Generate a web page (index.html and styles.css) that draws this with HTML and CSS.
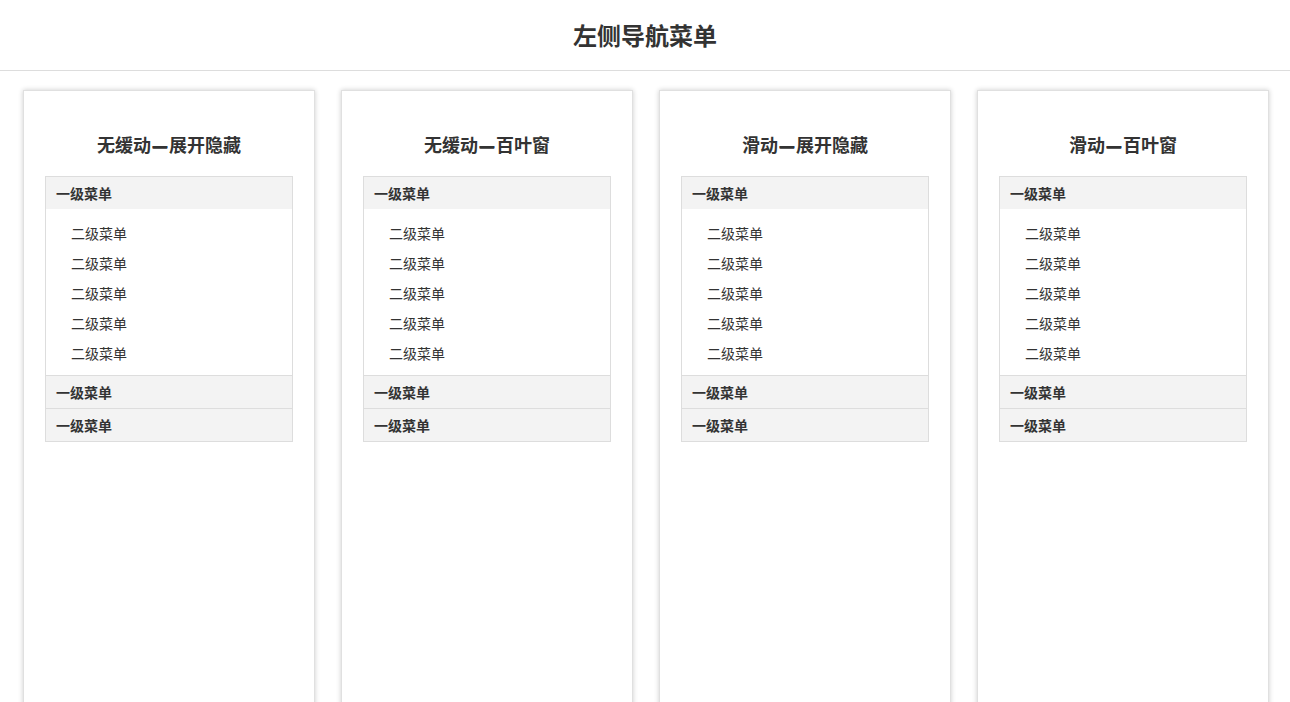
FILE: index.html
```html
<!DOCTYPE html>
<html lang="zh-CN">
<head>
<meta charset="utf-8">
<title>左侧导航菜单</title>
<link rel="stylesheet" href="styles.css">
</head>
<body>
<header class="page-header"><h1>左侧导航菜单</h1></header>
<main class="cards">
  <section class="card">
    <h2>无缓动<span class="dash">—</span>展开隐藏</h2>
    <div class="menu">
      <h3>一级菜单</h3>
      <ul><li>二级菜单</li><li>二级菜单</li><li>二级菜单</li><li>二级菜单</li><li>二级菜单</li></ul>
      <h3 class="sep">一级菜单</h3>
      <h3 class="sep">一级菜单</h3>
    </div>
  </section>
  <section class="card">
    <h2>无缓动<span class="dash">—</span>百叶窗</h2>
    <div class="menu">
      <h3>一级菜单</h3>
      <ul><li>二级菜单</li><li>二级菜单</li><li>二级菜单</li><li>二级菜单</li><li>二级菜单</li></ul>
      <h3 class="sep">一级菜单</h3>
      <h3 class="sep">一级菜单</h3>
    </div>
  </section>
  <section class="card">
    <h2>滑动<span class="dash">—</span>展开隐藏</h2>
    <div class="menu">
      <h3>一级菜单</h3>
      <ul><li>二级菜单</li><li>二级菜单</li><li>二级菜单</li><li>二级菜单</li><li>二级菜单</li></ul>
      <h3 class="sep">一级菜单</h3>
      <h3 class="sep">一级菜单</h3>
    </div>
  </section>
  <section class="card">
    <h2>滑动<span class="dash">—</span>百叶窗</h2>
    <div class="menu">
      <h3>一级菜单</h3>
      <ul><li>二级菜单</li><li>二级菜单</li><li>二级菜单</li><li>二级菜单</li><li>二级菜单</li></ul>
      <h3 class="sep">一级菜单</h3>
      <h3 class="sep">一级菜单</h3>
    </div>
  </section>
</main>
</body>
</html>
```
FILE: styles.css
```css
* { box-sizing: border-box; }
html, body { margin: 0; padding: 0; background: #fff; }
body {
  font-family: "Noto Sans CJK SC", "Noto Sans", sans-serif;
  color: #333;
  overflow: hidden;
}
.page-header {
  height: 71px;
  border-bottom: 1px solid #ddd;
  display: flex;
  align-items: center;
  justify-content: center;
}
.page-header h1 {
  margin: 0;
  font-size: 24px;
  font-weight: bold;
  line-height: 32px;
  color: #333;
}
.cards {
  display: flex;
  justify-content: center;
  gap: 26px;
  padding: 19px 0 0 2px;
}
.card {
  width: 292px;
  height: 700px;
  flex: none;
  background: #fff;
  border: 1px solid #e0e0e0;
  box-shadow: 0 0 5px rgba(0, 0, 0, 0.2);
  padding: 37px 21px 0;
}
.card h2 {
  margin: 0 0 16px;
  font-size: 18px;
  line-height: 32px;
  font-weight: bold;
  text-align: center;
  color: #333;
}
.card h2 .dash {
  display: inline-block;
  width: 18px;
  font-family: "Noto Sans CJK SC", sans-serif;
  text-shadow: 0 0.5px 0 #333, 0 -0.5px 0 #333;
}
.menu {
  border: 1px solid #ddd;
}
.menu h3 {
  margin: 0;
  height: 32px;
  line-height: 32px;
  padding-left: 10px;
  font-size: 14px;
  font-weight: bold;
  background: #f3f3f3;
  color: #333;
}
.menu h3.sep {
  border-top: 1px solid #ddd;
  height: 33px;
}
.menu ul {
  list-style: none;
  margin: 0;
  padding: 9px 0 7px;
}
.menu li {
  height: 30px;
  line-height: 30px;
  padding-left: 25px;
  font-size: 14px;
  color: #333;
}
```
